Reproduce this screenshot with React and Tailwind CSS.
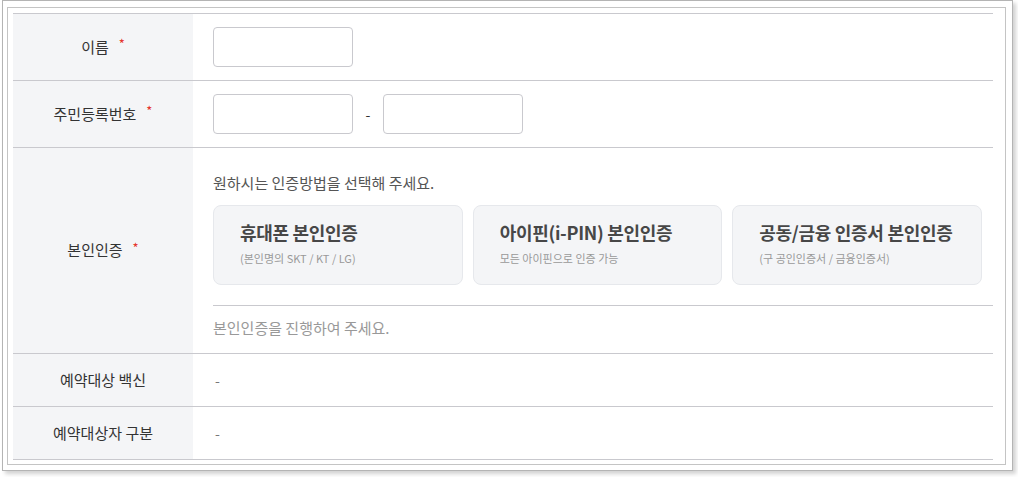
const font = { fontFamily: '"Noto Sans CJK KR", "Noto Sans", sans-serif' };

function Label({ children }) {
  return (
    <div className="w-[180px] shrink-0 bg-[#f4f5f7] flex items-center justify-center text-[15px] text-[#333]">
      <span>{children}</span>
      <span className="ml-[10px] -mt-[6px] text-[13px] text-[#e5362c]">*</span>
    </div>
  );
}

function PlainLabel({ children }) {
  return (
    <div className="w-[180px] shrink-0 bg-[#f4f5f7] flex items-center justify-center text-[15px] text-[#333]">
      {children}
    </div>
  );
}

function Field({ className = "" }) {
  return (
    <input
      type="text"
      className={`w-[140px] h-[40px] rounded-[4px] border border-[#c9c9ce] bg-white outline-none ${className}`}
    />
  );
}

const methods = [
  { title: "휴대폰 본인인증", sub: "(본인명의 SKT / KT / LG)" },
  { title: "아이핀(i-PIN) 본인인증", sub: "모든 아이핀으로 인증 가능" },
  { title: "공동/금융 인증서 본인인증", sub: "(구 공인인증서 / 금융인증서)" },
];

export default function App() {
  return (
    <div className="bg-white w-[1018px] h-[477px] overflow-hidden" style={font}>
      <div className="ml-[2px] w-[1011px] h-[471px] border border-[#b4b4b4] bg-white pt-[6px] pl-[4px] shadow-[3px_3px_4px_rgba(0,0,0,0.18)]">
        <div className="w-[999px] h-[458px] border border-[#c4c4c4] bg-white pt-[5px] pl-[5px]">
          <div className="w-[980px] border-t border-[#c9c9ce]">
            {/* 이름 */}
            <div className="flex h-[67px] border-b border-[#c9c9ce]">
              <Label>이름</Label>
              <div className="flex-1 flex items-center pl-[20px]">
                <Field />
              </div>
            </div>

            {/* 주민등록번호 */}
            <div className="flex h-[67px] border-b border-[#c9c9ce]">
              <Label>주민등록번호</Label>
              <div className="flex-1 flex items-center pl-[20px]">
                <Field />
                <span className="w-[30px] text-center text-[14px] text-[#333]">-</span>
                <Field />
              </div>
            </div>

            {/* 본인인증 */}
            <div className="flex h-[206px] border-b border-[#c9c9ce]">
              <Label>본인인증</Label>
              <div className="flex-1 pl-[20px] pt-[24px]">
                <p className="text-[15px] leading-[21px] text-[#555]">원하시는 인증방법을 선택해 주세요.</p>
                <div className="border-b border-[#c9c9ce] pt-[12px] pb-[20px]">
                  <div className="grid grid-cols-3 gap-[10px] w-[769px]">
                    {methods.map((m) => (
                      <button
                        key={m.title}
                        type="button"
                        className="h-[80px] flex flex-col justify-start rounded-[8px] border border-[#e6e8ec] bg-[#f4f5f7] pl-[26px] pt-[13px] text-left"
                      >
                        <div className="text-[18px] leading-[26px] font-bold text-[#474747] tracking-[-0.3px]">{m.title}</div>
                        <div className="mt-[5px] text-[11px] leading-[16px] text-[#999]">{m.sub}</div>
                      </button>
                    ))}
                  </div>
                </div>
                <p className="pt-[12px] text-[15px] leading-[20px] text-[#999]">본인인증을 진행하여 주세요.</p>
              </div>
            </div>

            {/* 예약대상 백신 */}
            <div className="flex h-[53px] border-b border-[#c9c9ce]">
              <PlainLabel>예약대상 백신</PlainLabel>
              <div className="flex-1 flex items-center pl-[22px] text-[14px] text-[#777]">-</div>
            </div>

            {/* 예약대상자 구분 */}
            <div className="flex h-[53px] border-b border-[#c9c9ce]">
              <PlainLabel>예약대상자 구분</PlainLabel>
              <div className="flex-1 flex items-center pl-[22px] text-[14px] text-[#777]">-</div>
            </div>
          </div>
        </div>
      </div>
    </div>
  );
}
